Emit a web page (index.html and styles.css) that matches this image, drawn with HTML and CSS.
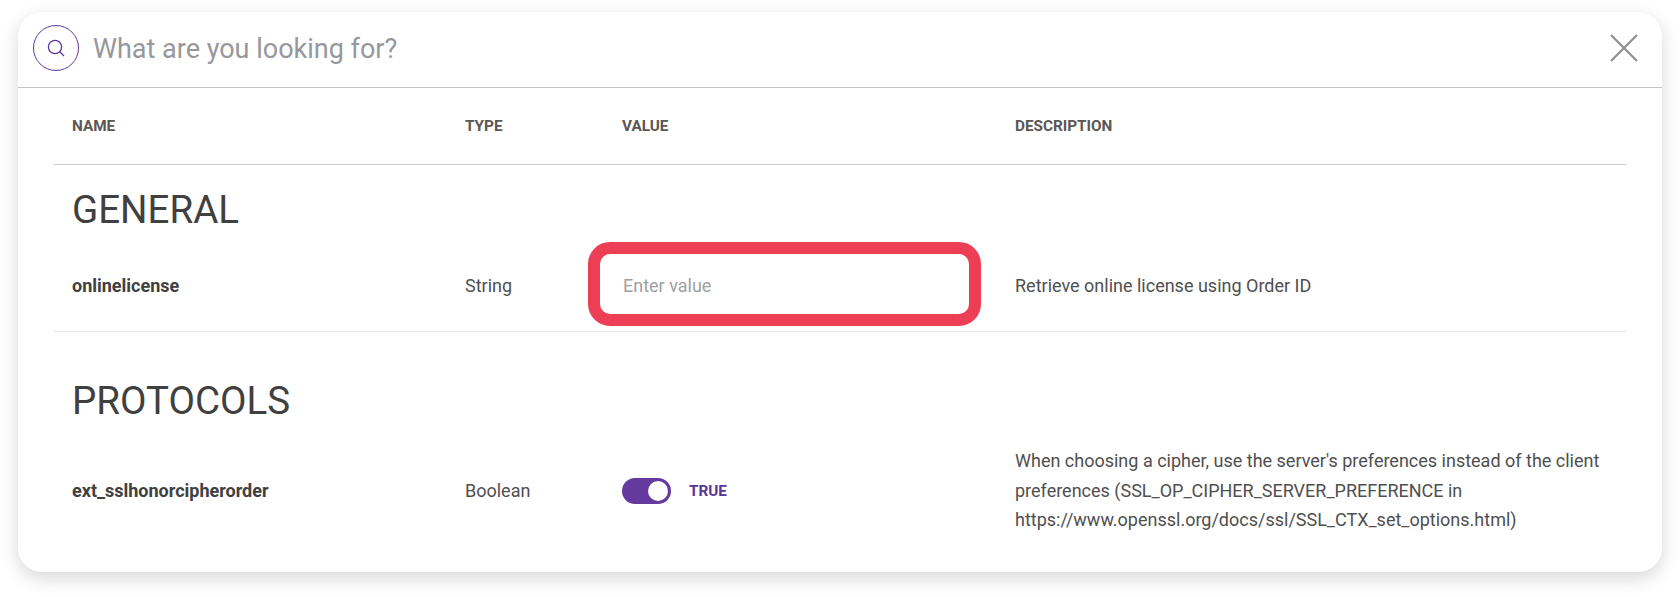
FILE: index.html
```html
<!DOCTYPE html>
<html lang="en">
<head>
  <meta charset="UTF-8" />
  <title>Settings search</title>
  <link rel="stylesheet" href="styles.css">
</head>
<body>
  <div class="card">
    <div class="search">
      <span class="search-icon">
        <svg width="20" height="20" viewBox="0 0 20 20" fill="none" stroke="#5f3a9c" stroke-width="1.3">
          <circle cx="9" cy="9" r="6.6" />
          <path d="M13.8 13.8L18 18" />
        </svg>
      </span>
      <span class="search-text">What are you looking for?</span>
      <svg class="close" width="28" height="28" viewBox="0 0 28 28" fill="none" stroke="#8f8f8f" stroke-width="2.2">
        <path d="M1 1L27 27M27 1L1 27" />
      </svg>
    </div>

    <div class="content">
      <div class="row head">
        <div>NAME</div>
        <div>TYPE</div>
        <div>VALUE</div>
        <div>DESCRIPTION</div>
      </div>

      <h2 class="section first">GENERAL</h2>
      <div class="row item general">
        <div class="name">onlinelicense</div>
        <div>String</div>
        <div class="value-cell"><div class="value-input">Enter value</div></div>
        <div>Retrieve online license using Order ID</div>
      </div>

      <h2 class="section">PROTOCOLS</h2>
      <div class="row item">
        <div class="name">ext_sslhonorcipherorder</div>
        <div>Boolean</div>
        <div class="toggle-wrap">
          <span class="toggle"><span class="knob"></span></span>
          <span class="toggle-label">TRUE</span>
        </div>
        <div class="desc">When choosing a cipher, use the server's preferences instead of the client preferences (SSL_OP_CIPHER_SERVER_PREFERENCE in https://www.openssl.org/docs/ssl/SSL_CTX_set_options.html)</div>
      </div>
    </div>
  </div>
</body>
</html>
```

FILE: styles.css
```css
html,
body {
  height: 100%;
}
body {
  margin: 0;
  padding: 12px 18px 0 18px;
  box-sizing: border-box;
  background: #fff;
  font-family: Roboto, "Liberation Sans", sans-serif;
  overflow: hidden;
}
.card {
  height: 560px;
  box-sizing: border-box;
  background: #fff;
  border-radius: 24px;
  box-shadow: 0 6px 18px rgb(0 0 0 / 0.16);
}
.search {
  display: flex;
  align-items: center;
  height: 71px;
  padding: 0 24px 4px 15px;
  border-bottom: 1px solid #c4c4c4;
}
.search-icon {
  display: flex;
  align-items: center;
  justify-content: center;
  box-sizing: border-box;
  width: 46px;
  height: 46px;
  border: 1.5px solid #5f3a9c;
  border-radius: 50%;
  margin-right: 14px;
}
.search-text {
  flex: 1;
  padding-top: 2px;
  font-size: 27px;
  color: #96989b;
}
.content {
  padding: 0 36px;
}
.row {
  display: grid;
  grid-template-columns: 393px 157px 393px 1fr;
  align-items: center;
  padding-left: 18px;
  font-size: 18px;
  color: #4f4f4f;
}
.head {
  height: 76px;
  border-bottom: 1px solid #c9c9c9;
  font-size: 15.3px;
  font-weight: 700;
  color: #5a5754;
}
.section {
  margin: 0;
  padding-left: 18px;
  padding-top: 48px;
  font-size: 38.5px;
  font-weight: 400;
  line-height: 42px;
  color: #404040;
}
.section.first {
  padding-top: 24px;
}
.item {
  line-height: 29.5px;
}
.general {
  box-sizing: border-box;
  height: 101px;
  padding-top: 10px;
  border-bottom: 1px solid #e6e6e6;
}
.item:last-child {
  margin-top: 24px;
  height: 88px;
}
.name {
  font-weight: 700;
  color: #404040;
}
.value-cell {
  margin-left: -34px;
  margin-right: 34px;
}
.value-input {
  box-sizing: border-box;
  width: 393px;
  height: 84px;
  margin-top: -5px;
  line-height: 64px;
  padding-left: 23px;
  border: 12px solid #ec3f56;
  border-radius: 22px;
  color: #a0a0a0;
}
.toggle-wrap {
  display: flex;
  align-items: center;
  padding-top: 2px;
}
.toggle {
  display: flex;
  align-items: center;
  justify-content: flex-end;
  width: 49px;
  height: 26px;
  box-sizing: border-box;
  padding-right: 3px;
  border-radius: 13px;
  background: #653a9f;
}
.knob {
  width: 20px;
  height: 20px;
  border-radius: 50%;
  background: #fff;
}
.toggle-label {
  margin-left: 18px;
  font-size: 15.3px;
  font-weight: 700;
  color: #5b3596;
}
.desc {
  width: 600px;
}
```
